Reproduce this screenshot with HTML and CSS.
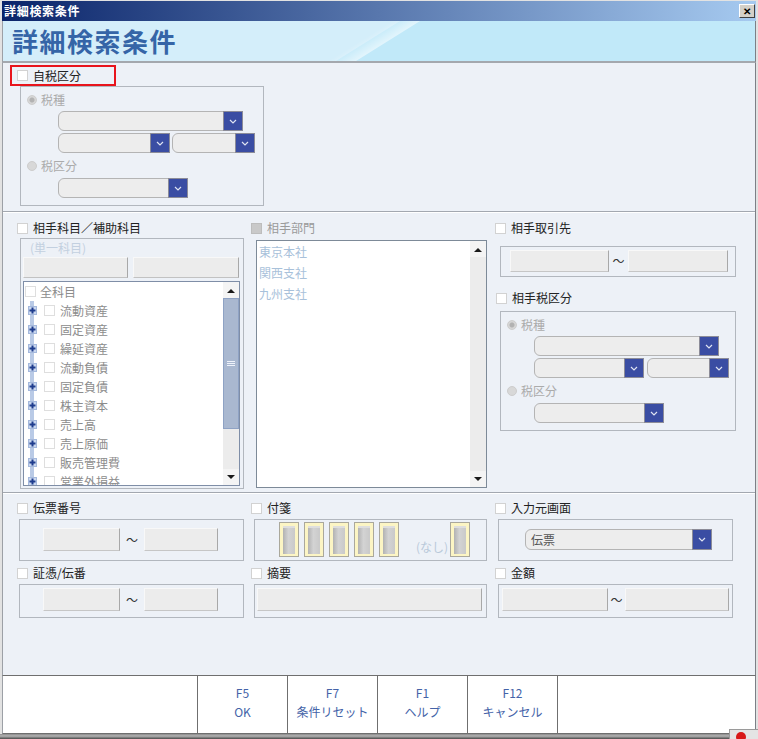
FILE: index.html
```html
<!DOCTYPE html>
<html lang="ja">
<head>
    <meta charset="UTF-8">
    <meta name="viewport" content="width=device-width, initial-scale=1.0">
    <title>詳細検索条件</title>
    <link rel="stylesheet" href="styles.css">
</head>
<body>

<div class="window">
    <div class="titlebar">
        <span class="titlebar-text">詳細検索条件</span>
        <span class="close-btn">✕</span>
    </div>

    <div class="banner">
        <h1>詳細検索条件</h1>
    </div>

    <div class="content">
        <!-- 自税区分 -->
        <section class="sec sec-tax">
            <div class="check-row highlight"><span class="cb"></span>自税区分</div>
            <div class="tax-group">
                <div class="radio-row"><span class="radio on"></span>税種</div>
                <div class="tax-sel">
                    <div class="select w185"><span class="sel-val"></span><span class="sel-btn"><svg width="8" height="5" viewBox="0 0 8 5"><path d="M1 1 L4 4 L7 1" fill="none" stroke="#dfe4f2" stroke-width="1.2"/></svg></span></div>
                    <div class="sel-pair">
                        <div class="select w112"><span class="sel-val"></span><span class="sel-btn"><svg width="8" height="5" viewBox="0 0 8 5"><path d="M1 1 L4 4 L7 1" fill="none" stroke="#dfe4f2" stroke-width="1.2"/></svg></span></div>
                        <div class="select w83"><span class="sel-val"></span><span class="sel-btn"><svg width="8" height="5" viewBox="0 0 8 5"><path d="M1 1 L4 4 L7 1" fill="none" stroke="#dfe4f2" stroke-width="1.2"/></svg></span></div>
                    </div>
                </div>
                <div class="radio-row r2"><span class="radio"></span>税区分</div>
                <div class="tax-sel s2">
                    <div class="select w130"><span class="sel-val"></span><span class="sel-btn"><svg width="8" height="5" viewBox="0 0 8 5"><path d="M1 1 L4 4 L7 1" fill="none" stroke="#dfe4f2" stroke-width="1.2"/></svg></span></div>
                </div>
            </div>
        </section>

        <!-- 相手科目 / 相手部門 / 相手取引先 -->
        <section class="sec sec-mid">
            <div class="col col-left">
                <div class="check-row ml14"><span class="cb"></span>相手科目／補助科目</div>
                <div class="acc-group">
                    <div class="caption">(単一科目)</div>
                    <div class="btn-row">
                        <span class="pbtn w105"></span>
                        <span class="pbtn w106"></span>
                    </div>
                    <div class="tree">
                        <div class="tree-items">
                            <div class="t-item root"><span class="cb light"></span>全科目</div>
                            <div class="t-item child"><span class="exp"><svg width="9" height="9" viewBox="0 0 9 9"><rect x="0.5" y="0.5" width="8" height="8" fill="#c9d7ef" stroke="#a4b8dc"/><path d="M4.5 1.5v6M1.5 4.5h6" stroke="#1f3d8e" stroke-width="2"/></svg></span><span class="cb light"></span>流動資産</div>
                            <div class="t-item child"><span class="exp"><svg width="9" height="9" viewBox="0 0 9 9"><rect x="0.5" y="0.5" width="8" height="8" fill="#c9d7ef" stroke="#a4b8dc"/><path d="M4.5 1.5v6M1.5 4.5h6" stroke="#1f3d8e" stroke-width="2"/></svg></span><span class="cb light"></span>固定資産</div>
                            <div class="t-item child"><span class="exp"><svg width="9" height="9" viewBox="0 0 9 9"><rect x="0.5" y="0.5" width="8" height="8" fill="#c9d7ef" stroke="#a4b8dc"/><path d="M4.5 1.5v6M1.5 4.5h6" stroke="#1f3d8e" stroke-width="2"/></svg></span><span class="cb light"></span>繰延資産</div>
                            <div class="t-item child"><span class="exp"><svg width="9" height="9" viewBox="0 0 9 9"><rect x="0.5" y="0.5" width="8" height="8" fill="#c9d7ef" stroke="#a4b8dc"/><path d="M4.5 1.5v6M1.5 4.5h6" stroke="#1f3d8e" stroke-width="2"/></svg></span><span class="cb light"></span>流動負債</div>
                            <div class="t-item child"><span class="exp"><svg width="9" height="9" viewBox="0 0 9 9"><rect x="0.5" y="0.5" width="8" height="8" fill="#c9d7ef" stroke="#a4b8dc"/><path d="M4.5 1.5v6M1.5 4.5h6" stroke="#1f3d8e" stroke-width="2"/></svg></span><span class="cb light"></span>固定負債</div>
                            <div class="t-item child"><span class="exp"><svg width="9" height="9" viewBox="0 0 9 9"><rect x="0.5" y="0.5" width="8" height="8" fill="#c9d7ef" stroke="#a4b8dc"/><path d="M4.5 1.5v6M1.5 4.5h6" stroke="#1f3d8e" stroke-width="2"/></svg></span><span class="cb light"></span>株主資本</div>
                            <div class="t-item child"><span class="exp"><svg width="9" height="9" viewBox="0 0 9 9"><rect x="0.5" y="0.5" width="8" height="8" fill="#c9d7ef" stroke="#a4b8dc"/><path d="M4.5 1.5v6M1.5 4.5h6" stroke="#1f3d8e" stroke-width="2"/></svg></span><span class="cb light"></span>売上高</div>
                            <div class="t-item child"><span class="exp"><svg width="9" height="9" viewBox="0 0 9 9"><rect x="0.5" y="0.5" width="8" height="8" fill="#c9d7ef" stroke="#a4b8dc"/><path d="M4.5 1.5v6M1.5 4.5h6" stroke="#1f3d8e" stroke-width="2"/></svg></span><span class="cb light"></span>売上原価</div>
                            <div class="t-item child"><span class="exp"><svg width="9" height="9" viewBox="0 0 9 9"><rect x="0.5" y="0.5" width="8" height="8" fill="#c9d7ef" stroke="#a4b8dc"/><path d="M4.5 1.5v6M1.5 4.5h6" stroke="#1f3d8e" stroke-width="2"/></svg></span><span class="cb light"></span>販売管理費</div>
                            <div class="t-item child"><span class="exp"><svg width="9" height="9" viewBox="0 0 9 9"><rect x="0.5" y="0.5" width="8" height="8" fill="#c9d7ef" stroke="#a4b8dc"/><path d="M4.5 1.5v6M1.5 4.5h6" stroke="#1f3d8e" stroke-width="2"/></svg></span><span class="cb light"></span>営業外損益</div>
                        </div>
                        <div class="scroll">
                            <span class="sb-btn"><svg width="8" height="5" viewBox="0 0 8 5"><path d="M0 5 L4 1 L8 5Z" fill="#1a1a1a"/></svg></span>
                            <span class="sb-thumb"><span class="grip"></span></span>
                            <span class="sb-track"></span>
                            <span class="sb-btn"><svg width="8" height="5" viewBox="0 0 8 5"><path d="M0 0 L4 4 L8 0Z" fill="#1a1a1a"/></svg></span>
                        </div>
                    </div>
                </div>
            </div>

            <div class="col col-center">
                <div class="check-row ml3 disabled"><span class="cb off"></span>相手部門</div>
                <div class="dept-list">
                    <div class="dept-items">
                        <div class="d-item">東京本社</div>
                        <div class="d-item">関西支社</div>
                        <div class="d-item">九州支社</div>
                    </div>
                    <div class="scroll">
                        <span class="sb-btn"><svg width="8" height="5" viewBox="0 0 8 5"><path d="M0 5 L4 1 L8 5Z" fill="#1a1a1a"/></svg></span>
                        <span class="sb-track"></span>
                        <span class="sb-btn"><svg width="8" height="5" viewBox="0 0 8 5"><path d="M0 0 L4 4 L8 0Z" fill="#1a1a1a"/></svg></span>
                    </div>
                </div>
            </div>

            <div class="col col-right">
                <div class="check-row ml5"><span class="cb"></span>相手取引先</div>
                <div class="range-box partner">
                    <span class="tb w99"></span><span class="tilde t19">～</span><span class="tb w100"></span>
                </div>
                <div class="check-row ml6 mt14"><span class="cb"></span>相手税区分</div>
                <div class="tax-group alt">
                    <div class="radio-row"><span class="radio on"></span>税種</div>
                    <div class="tax-sel">
                        <div class="select w185"><span class="sel-val"></span><span class="sel-btn"><svg width="8" height="5" viewBox="0 0 8 5"><path d="M1 1 L4 4 L7 1" fill="none" stroke="#dfe4f2" stroke-width="1.2"/></svg></span></div>
                        <div class="sel-pair">
                            <div class="select w112"><span class="sel-val"></span><span class="sel-btn"><svg width="8" height="5" viewBox="0 0 8 5"><path d="M1 1 L4 4 L7 1" fill="none" stroke="#dfe4f2" stroke-width="1.2"/></svg></span></div>
                            <div class="select w83"><span class="sel-val"></span><span class="sel-btn"><svg width="8" height="5" viewBox="0 0 8 5"><path d="M1 1 L4 4 L7 1" fill="none" stroke="#dfe4f2" stroke-width="1.2"/></svg></span></div>
                        </div>
                    </div>
                    <div class="radio-row r2"><span class="radio"></span>税区分</div>
                    <div class="tax-sel s2">
                        <div class="select w130"><span class="sel-val"></span><span class="sel-btn"><svg width="8" height="5" viewBox="0 0 8 5"><path d="M1 1 L4 4 L7 1" fill="none" stroke="#dfe4f2" stroke-width="1.2"/></svg></span></div>
                    </div>
                </div>
            </div>
        </section>

        <!-- 伝票番号 / 付箋 / 入力元画面 / 証憑 / 摘要 / 金額 -->
        <section class="sec-rows">
            <div class="cell c1">
                <div class="check-row ml14"><span class="cb"></span>伝票番号</div>
                <div class="rbox w225 h42 pad-num">
                    <span class="tb w77"></span><span class="tilde t24">～</span><span class="tb w74"></span>
                </div>
            </div>
            <div class="cell c2">
                <div class="check-row ml3"><span class="cb"></span>付箋</div>
                <div class="rbox w233 h42 tags">
                    <span class="tag"><span></span></span>
                    <span class="tag"><span></span></span>
                    <span class="tag"><span></span></span>
                    <span class="tag"><span></span></span>
                    <span class="tag"><span></span></span>
                    <span class="nashi">(なし)</span>
                    <span class="tag"><span></span></span>
                </div>
            </div>
            <div class="cell c3">
                <div class="check-row ml5"><span class="cb"></span>入力元画面</div>
                <div class="rbox w235 h42 pad-src">
                    <div class="select w187"><span class="sel-val">伝票</span><span class="sel-btn"><svg width="8" height="5" viewBox="0 0 8 5"><path d="M1 1 L4 4 L7 1" fill="none" stroke="#dfe4f2" stroke-width="1.2"/></svg></span></div>
                </div>
            </div>

            <div class="cell c1">
                <div class="check-row ml14"><span class="cb"></span>証憑/伝番</div>
                <div class="rbox w225 h34 pad-num2">
                    <span class="tb w77"></span><span class="tilde t24">～</span><span class="tb w74"></span>
                </div>
            </div>
            <div class="cell c2">
                <div class="check-row ml3"><span class="cb"></span>摘要</div>
                <div class="rbox w233 h34 pad-memo">
                    <span class="tb w225"></span>
                </div>
            </div>
            <div class="cell c3">
                <div class="check-row ml5"><span class="cb"></span>金額</div>
                <div class="rbox w235 h34 pad-amt">
                    <span class="tb w106"></span><span class="tilde t17">～</span><span class="tb w104"></span>
                </div>
            </div>
        </section>
    </div>

    <div class="footer">
        <div class="f-blank"></div>
        <div class="f-key">F5<br>OK</div>
        <div class="f-key">F7<br>条件リセット</div>
        <div class="f-key">F1<br>ヘルプ</div>
        <div class="f-key">F12<br>キャンセル</div>
        <div class="f-blank last"></div>
    </div>
    <div class="bottom-strip"></div>

    <div class="tray"><span class="tray-dot"></span></div>
</div>

</body>
</html>
```

FILE: styles.css
```css
body {
    margin: 0;
    font-family: "Noto Sans CJK JP", "Noto Sans", sans-serif;
    font-size: 12px;
    color: #222;
}
.window {
    position: relative;
    box-sizing: border-box;
    width: 758px;
    height: 739px;
    padding: 1px 2px 0;
    background: #e2e2e2;
    border-top: 0;
    display: flex;
    flex-direction: column;
    overflow: hidden;
}

/* title bar */
.titlebar {
    flex: none;
    height: 20px;
    display: flex;
    align-items: center;
    justify-content: space-between;
    padding: 0 1px 0 2px;
    background: linear-gradient(to right, #0a246a, #a6caf0);
    color: #fff;
    font-weight: bold;
}
.titlebar-text {
    font-size: 12px;
    line-height: 20px;
    letter-spacing: 0.7px;
}
.close-btn {
    box-sizing: border-box;
    width: 16px;
    height: 14px;
    background: #d4d0c8;
    border: 1px solid;
    border-color: #fff #404040 #404040 #fff;
    color: #000;
    font-size: 10px;
    line-height: 12px;
    text-align: center;
}

/* banner */
.banner {
    flex: none;
    position: relative;
    height: 40px;
    overflow: hidden;
    background: #c1e9f9;
    border-left: 1px solid #9ca0a6;
    border-right: 1px solid #7c8086;
    border-bottom: 2px solid #a4a8ae;
}
.banner::before {
    content: "";
    position: absolute;
    left: -80px;
    top: 0;
    bottom: 0;
    width: 413px;
    background: #d4eefa;
    transform: skewX(-58deg);
    transform-origin: bottom left;
}
.banner::after {
    content: "";
    position: absolute;
    left: 325px;
    top: 0;
    bottom: 0;
    width: 28px;
    background: linear-gradient(to right, rgba(255,255,255,0), rgba(255,255,255,0.55));
    transform: skewX(-58deg);
    transform-origin: bottom left;
}
.banner h1 {
    position: relative;
    z-index: 1;
    margin: 0;
    padding-left: 9px;
    font-size: 26px;
    line-height: 40px;
    letter-spacing: 1.5px;
    color: #3565a7;
}

/* body */
.content {
    flex: 1;
    background: #edf1f7;
    border-left: 1px solid #9ca0a6;
    border-right: 1px solid #7c8086;
}
.sec {
    box-sizing: border-box;
    border-bottom: 1px solid #a3a8b0;
    box-shadow: 0 1px 0 #fff;
}
.sec-tax {
    height: 149px;
    padding-top: 2px;
}
.sec-mid {
    height: 281px;
    padding-top: 9px;
    display: flex;
}

.check-row {
    display: flex;
    align-items: center;
    gap: 5px;
    height: 14px;
    line-height: 14px;
    white-space: nowrap;
}
.check-row.disabled {
    color: #9a9a9a;
}
.ml3 { margin-left: 3px; }
.ml5 { margin-left: 5px; }
.ml6 { margin-left: 6px; }
.ml14 { margin-left: 14px; }
.mt14 { margin-top: 14px; }

.highlight {
    box-sizing: border-box;
    width: 106px;
    height: 21px;
    margin-left: 7px;
    padding-left: 5px;
    border: 2px solid #e8141c;
}
.cb {
    flex: none;
    box-sizing: border-box;
    width: 11px;
    height: 11px;
    background: #fff;
    border: 1px solid #d2d2d2;
}
.cb.light {
    border-color: #dedede;
}
.cb.off {
    background: #c9c9c9;
    border-color: #bdbdbd;
}
.radio {
    flex: none;
    box-sizing: border-box;
    width: 10px;
    height: 10px;
    border-radius: 50%;
    background: #d8d8d8;
    border: 1px solid #cdcdcd;
}
.radio.on {
    background: radial-gradient(circle, #b2b2b2 0 2px, #d6d6d6 3px);
}

/* tax group */
.tax-group {
    box-sizing: border-box;
    width: 244px;
    height: 120px;
    margin-left: 17px;
    padding: 6px 6px 0;
    border: 1px solid #b2b7be;
}
.tax-group.alt {
    width: 236px;
    margin: 6px 0 0 10px;
}
.radio-row {
    display: flex;
    align-items: center;
    gap: 4px;
    height: 14px;
    line-height: 14px;
    color: #ababab;
}
.radio-row.r2 {
    margin-top: 6px;
}
.tax-sel {
    display: flex;
    flex-direction: column;
    gap: 2px;
    margin: 4px 0 0 31px;
}
.tax-group.alt .tax-sel {
    margin-left: 27px;
}
.tax-sel.s2 {
    margin-top: 5px;
}
.sel-pair {
    display: flex;
    gap: 2px;
}
.tax-group.alt .sel-pair {
    gap: 3px;
}

.select {
    box-sizing: border-box;
    display: flex;
    height: 20px;
    background: #ededed;
    border: 1px solid #b4b4b4;
    border-radius: 6px 0 0 6px;
}
.sel-val {
    flex: 1;
    padding-left: 5px;
    line-height: 19px;
    color: #555;
}
.sel-btn {
    box-sizing: border-box;
    width: 20px;
    margin: -1px -1px -1px 0;
    display: flex;
    align-items: center;
    justify-content: center;
    background: #3a4da3;
    border: 1px solid #8c8c98;
}
.w83 { width: 83px; }
.w112 { width: 112px; }
.w130 { width: 130px; }
.w185 { width: 185px; }
.w187 { width: 187px; height: 21px; }

/* text boxes */
.tb {
    display: block;
    flex: none;
    box-sizing: border-box;
    height: 23px;
    background: #ececec;
    border: 1px solid;
    border-color: #f8f8f8 #a8a8a8 #c6c6c6 #f8f8f8;
}
.tilde {
    flex: none;
    text-align: center;
    font-size: 12px;
    color: #333;
}
.t17 { width: 17px; }
.t19 { width: 19px; }
.t24 { width: 24px; }
.w74 { width: 74px; }
.w77 { width: 77px; }
.w99 { width: 99px; }
.w100 { width: 100px; }
.w104 { width: 104px; }
.w106 { width: 106px; }
.tb.w225 { width: 225px; }

/* left column */
.col-left { width: 245px; flex: none; }
.col-center { width: 242px; flex: none; }
.col-right { width: 265px; flex: none; }

.acc-group {
    box-sizing: border-box;
    width: 224px;
    height: 251px;
    margin: 3px 0 0 17px;
    border: 1px solid #b2b7be;
}
.caption {
    height: 14px;
    line-height: 14px;
    margin: 2px 0 0 9px;
    color: #c3d0e0;
}
.btn-row {
    display: flex;
    gap: 5px;
    margin: 2px 0 0 2px;
}
.pbtn {
    box-sizing: border-box;
    height: 21px;
    background: #ececec;
    border: 1px solid;
    border-color: #f8f8f8 #a8a8a8 #c2c2c2 #f8f8f8;
}
.w105 { width: 105px; }
.w106 { width: 106px; }

.tree {
    box-sizing: border-box;
    display: flex;
    width: 217px;
    height: 205px;
    margin: 3px 0 0 2px;
    background: #fff;
    border: 1px solid #7f8ea7;
}
.tree-items {
    flex: 1;
    overflow: hidden;
}
.t-item {
    display: flex;
    align-items: center;
    height: 19px;
    color: #8c8c8c;
    white-space: nowrap;
}
.t-item.root {
    padding-left: 1px;
    gap: 4px;
}
.t-item.child {
    padding-left: 4px;
}
.t-item.child .cb {
    margin-right: 5px;
}
.exp {
    flex: none;
    display: flex;
    align-items: center;
    width: 9px;
    height: 19px;
    margin-right: 7px;
    background: linear-gradient(to right, transparent 2px, #b9cae6 2px, #b9cae6 6px, transparent 6px);
}

.scroll {
    flex: none;
    display: flex;
    flex-direction: column;
    width: 16px;
    background: #ececec;
}
.sb-btn {
    flex: none;
    height: 16px;
    display: flex;
    align-items: center;
    justify-content: center;
    background: #f4f4f4;
}
.sb-thumb {
    flex: none;
    box-sizing: border-box;
    height: 131px;
    display: flex;
    align-items: center;
    justify-content: center;
    background: #a9b8d0;
    border: 1px solid #8ea2c4;
}
.grip {
    width: 8px;
    height: 5px;
    background: linear-gradient(#eef2fa 0 1px, transparent 1px 2px, #eef2fa 2px 3px, transparent 3px 4px, #eef2fa 4px 5px);
}
.sb-track {
    flex: 1;
}

/* center column */
.dept-list {
    box-sizing: border-box;
    display: flex;
    width: 231px;
    height: 248px;
    margin: 5px 0 0 8px;
    background: #fff;
    border: 1px solid #7d8a98;
}
.dept-items {
    flex: 1;
    padding-left: 2px;
}
.d-item {
    height: 21px;
    line-height: 21px;
    color: #a8c1da;
}

/* right column */
.range-box {
    box-sizing: border-box;
    display: flex;
    align-items: flex-start;
    border: 1px solid #b2b7be;
}
.range-box.partner {
    width: 236px;
    height: 31px;
    margin: 11px 0 0 10px;
    padding: 3px 0 0 9px;
}
.range-box.partner .tb {
    height: 22px;
}
.range-box .tilde {
    line-height: 22px;
}

/* bottom rows */
.sec-rows {
    display: grid;
    grid-template-columns: 245px 242px 265px;
    row-gap: 5px;
    padding-top: 8px;
}
.rbox {
    box-sizing: border-box;
    display: flex;
    align-items: flex-start;
    margin-top: 4px;
    border: 1px solid #b2b7be;
}
.rbox .tilde {
    line-height: 23px;
}
.c1 .rbox { margin-left: 16px; }
.c2 .rbox { margin-left: 6px; }
.c3 .rbox { margin-left: 8px; }
.w225 { width: 225px; }
.w233 { width: 233px; }
.w235 { width: 235px; }
.h34 { height: 34px; }
.h42 { height: 42px; }
.pad-num { padding: 8px 0 0 23px; }
.pad-num2 { padding: 3px 0 0 23px; }
.pad-memo { padding: 3px 0 0 2px; }
.pad-amt { padding: 3px 0 0 3px; }
.pad-src { padding: 9px 0 0 26px; }

.tags {
    gap: 5px;
    padding: 2px 16px 0 24px;
}
.tag {
    flex: none;
    box-sizing: border-box;
    width: 20px;
    height: 35px;
    padding: 3px 3px 2px;
    background: #fcf5c4;
    border: 1px solid #aaa89c;
}
.tag span {
    display: block;
    height: 100%;
    box-sizing: border-box;
    background: linear-gradient(to right, #b2b2b2, #d3d3d3 45%, #c9c9c9);
    border-top: 2px solid #dedede;
}
.nashi {
    margin: 18px -3px 0 auto;
    line-height: 14px;
    color: #b9c9da;
}

/* footer */
.footer {
    flex: none;
    box-sizing: border-box;
    display: flex;
    height: 59px;
    background: #fff;
    border: 1px solid #6f6f6f;
    border-left-color: #9ca0a6;
    border-right-color: #7c8086;
}
.f-blank {
    width: 194px;
}
.f-blank.last {
    flex: 1;
    border-left: 1px solid #6f6f6f;
}
.f-key {
    box-sizing: border-box;
    width: 90px;
    padding-top: 7px;
    border-left: 1px solid #6f6f6f;
    text-align: center;
    line-height: 19px;
    color: #4463a8;
}
.bottom-strip {
    flex: none;
    height: 5px;
    margin: 0 -2px;
    background: linear-gradient(#8a8a8a, #b4b4b4 40%, #4a4a4a);
}
.tray {
    position: absolute;
    right: 0;
    bottom: 0;
    width: 28px;
    height: 9px;
    overflow: hidden;
    background: #e4e4e4;
    border-top: 1px solid #9a9a9a;
    border-left: 1px solid #9a9a9a;
}
.tray-dot {
    position: absolute;
    left: 6px;
    top: 2px;
    width: 10px;
    height: 10px;
    border-radius: 50%;
    background: #d81818;
}
```
